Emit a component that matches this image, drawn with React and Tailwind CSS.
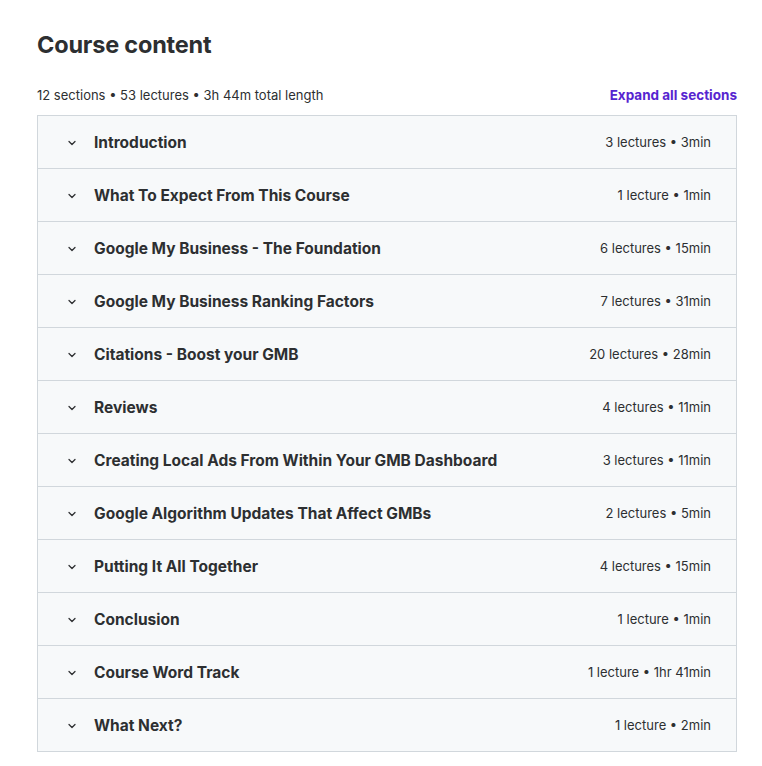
import React from 'react';

const sections = [
  { title: 'Introduction', meta: '3 lectures • 3min' },
  { title: 'What To Expect From This Course', meta: '1 lecture • 1min' },
  { title: 'Google My Business - The Foundation', meta: '6 lectures • 15min' },
  { title: 'Google My Business Ranking Factors', meta: '7 lectures • 31min' },
  { title: 'Citations - Boost your GMB', meta: '20 lectures • 28min' },
  { title: 'Reviews', meta: '4 lectures • 11min' },
  { title: 'Creating Local Ads From Within Your GMB Dashboard', meta: '3 lectures • 11min' },
  { title: 'Google Algorithm Updates That Affect GMBs', meta: '2 lectures • 5min' },
  { title: 'Putting It All Together', meta: '4 lectures • 15min' },
  { title: 'Conclusion', meta: '1 lecture • 1min' },
  { title: 'Course Word Track', meta: '1 lecture • 1hr 41min' },
  { title: 'What Next?', meta: '1 lecture • 2min' },
];

const Chevron = () => (
  <svg width="12" height="12" viewBox="0 0 24 24" fill="none" stroke="#2d2f31" strokeWidth="2.5" strokeLinecap="round" strokeLinejoin="round">
    <path d="M6 9l6 6 6-6" />
  </svg>
);

const App = () => {
  return (
    <div className="min-h-screen bg-white text-[#2d2f31] pt-[28px] px-[37px]" style={{ fontFamily: 'Inter, "Noto Sans", sans-serif' }}>
      <h2 className="text-[23.5px] font-bold leading-[34px] tracking-[-0.2px]">Course content</h2>
      <div className="flex items-center justify-between mt-[23px] mb-[10px] w-[700px]">
        <span className="text-[13px] leading-[20px]">12 sections • 53 lectures • 3h 44m total length</span>
        <button className="text-[13.5px] font-bold text-[#5624d0] leading-[20px]">Expand all sections</button>
      </div>
      <div className="w-[700px] border border-[#d1d7dc]">
        {sections.map((s, i) => (
          <div
            key={s.title}
            className={`flex items-center justify-between bg-[#f7f9fa] pl-[28px] pr-[25px] pt-px ${i > 0 ? 'h-[53px] border-t border-[#d1d7dc]' : 'h-[52px]'}`}
          >
            <div className="flex items-center gap-[16px]">
              <Chevron />
              <span className="text-[15.5px] font-bold">{s.title}</span>
            </div>
            <span className="text-[13px]">{s.meta}</span>
          </div>
        ))}
      </div>
    </div>
  );
};

export default App;
